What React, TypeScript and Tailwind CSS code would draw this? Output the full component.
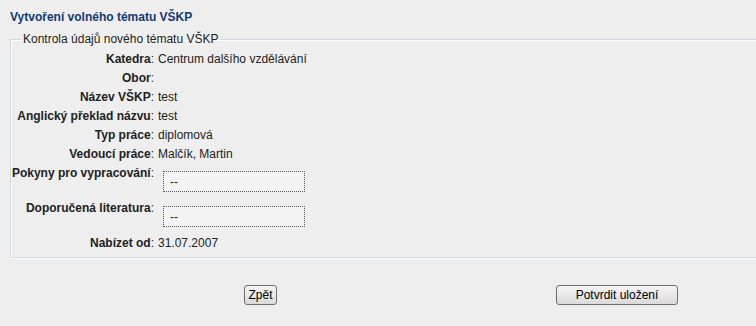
import React from 'react';

const rows = [
    { label: 'Katedra', value: 'Centrum dalšího vzdělávání' },
    { label: 'Obor', value: '' },
    { label: 'Název VŠKP', value: 'test' },
    { label: 'Anglický překlad názvu', value: 'test' },
    { label: 'Typ práce', value: 'diplomová' },
    { label: 'Vedoucí práce', value: 'Malčík, Martin' },
];

const boxes = [
    { label: 'Pokyny pro vypracování', value: '--' },
    { label: 'Doporučená literatura', value: '--' },
];

function Button({ children, className = '' }: { children: React.ReactNode; className?: string }) {
    return (
        <button
            className={`h-[20px] border border-[#707070] rounded-[3px] bg-gradient-to-b from-[#f6f6f6] to-[#dadada] text-[12px] leading-[16px] text-black ${className}`}
        >
            {children}
        </button>
    );
}

export default function App() {
    return (
        <div className="w-full h-[326px] overflow-hidden bg-[#eeeeee] text-[12px] text-[#222] font-['Liberation_Sans',Arial,sans-serif]">
            {/* nadpis */}
            <h1 className="pt-[10px] pl-[10px] leading-[14px] font-bold text-[#123a73]">
                Vytvoření volného tématu VŠKP
            </h1>

            {/* kontrola údajů */}
            <fieldset className="mt-[8px] ml-[10px] mr-[-6px] border border-[#d0d9e3] shadow-[inset_1px_1px_0_#fff,0_1px_0_#fff] pt-[4px] pb-[4px]">
                <legend className="ml-[10px] px-[2px] leading-[14px]">Kontrola údajů nového tématu VŠKP</legend>

                {rows.map((row) => (
                    <div key={row.label} className="flex h-[19px] leading-[19px]">
                        <div className="w-[143px] text-right">
                            <span className="font-bold">{row.label}</span>:
                        </div>
                        <div className="pl-[4px]">{row.value}</div>
                    </div>
                ))}

                {boxes.map((row) => (
                    <div key={row.label} className="flex items-start">
                        <div className="w-[143px] text-right leading-[19px]">
                            <span className="font-bold">{row.label}</span>:
                        </div>
                        <div className="py-[7px] pl-[9px]">
                            <div className="w-[142px] h-[21px] border border-dotted border-[#555] bg-[#f4f4f4] pl-[6px] pt-[3px] leading-[14px]">
                                {row.value}
                            </div>
                        </div>
                    </div>
                ))}

                <div className="flex h-[19px] leading-[19px]">
                    <div className="w-[143px] text-right">
                        <span className="font-bold">Nabízet od</span>:
                    </div>
                    <div className="pl-[4px]">31.07.2007</div>
                </div>
            </fieldset>

            {/* tlačítka */}
            <div className="flex mt-[27px]">
                <Button className="ml-[244px] w-[33px]">Zpět</Button>
                <Button className="ml-[279px] w-[122px]">Potvrdit uložení</Button>
            </div>
        </div>
    );
}
